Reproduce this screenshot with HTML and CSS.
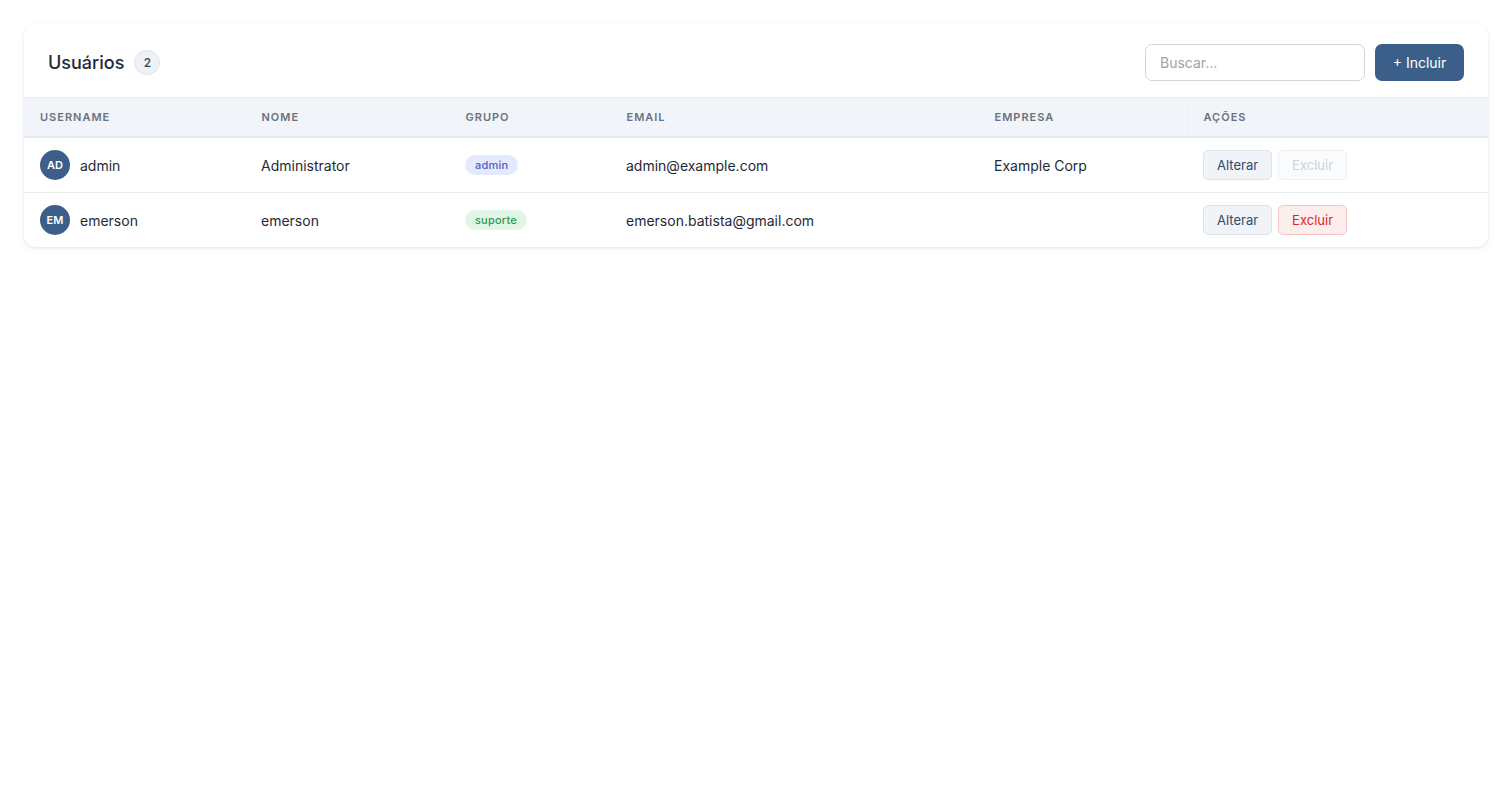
FILE: index.html
```html
<!DOCTYPE html>
<html>
  <head>
    <meta charset="utf-8" />
    <title>Usuários</title>
    <link rel="stylesheet" href="styles.css">
  </head>
  <body>
    <div class="card">
      <div class="card-header">
        <div class="title">
          <h2>Usuários</h2>
          <span class="count">2</span>
        </div>
        <div class="toolbar">
          <input type="text" class="search" placeholder="Buscar..." />
          <button class="btn-primary">+ Incluir</button>
        </div>
      </div>
      <table class="users">
        <thead>
          <tr>
            <th class="col-user">Username</th>
            <th class="col-nome">Nome</th>
            <th class="col-grupo">Grupo</th>
            <th class="col-email">Email</th>
            <th class="col-empresa">Empresa</th>
            <th>Ações</th>
          </tr>
        </thead>
        <tbody>
          <tr>
            <td>
              <div class="user">
                <span class="avatar">AD</span>
                <span>admin</span>
              </div>
            </td>
            <td>Administrator</td>
            <td><span class="tag tag-admin">admin</span></td>
            <td>admin@example.com</td>
            <td>Example Corp</td>
            <td>
              <div class="actions">
                <button class="btn-edit">Alterar</button>
                <button class="btn-delete" disabled>Excluir</button>
              </div>
            </td>
          </tr>
          <tr>
            <td>
              <div class="user">
                <span class="avatar">EM</span>
                <span>emerson</span>
              </div>
            </td>
            <td>emerson</td>
            <td><span class="tag tag-suporte">suporte</span></td>
            <td>emerson.batista@gmail.com</td>
            <td></td>
            <td>
              <div class="actions">
                <button class="btn-edit">Alterar</button>
                <button class="btn-delete">Excluir</button>
              </div>
            </td>
          </tr>
        </tbody>
      </table>
    </div>
  </body>
</html>
```

FILE: styles.css
```css
body {
  margin: 0;
  padding: 24px;
  font-family: Inter, "Noto Sans", Arial, sans-serif;
  color: #1f2937;
  background: #ffffff;
}
.card {
  background: white;
  border-radius: 12px;
  box-shadow: 0 1px 3px rgba(0, 0, 0, 0.08), 0 2px 10px rgba(0, 0, 0, 0.04);
  overflow: hidden;
}
.card-header {
  display: flex;
  justify-content: space-between;
  align-items: center;
  padding: 20px 24px 16px;
  border-bottom: 1px solid #e2e8f0;
}
.title {
  display: flex;
  align-items: center;
  gap: 10px;
}
.title h2 {
  margin: 0;
  font-size: 18px;
  font-weight: 500;
  color: #1e293b;
}
.count {
  display: inline-flex;
  align-items: center;
  justify-content: center;
  min-width: 26px;
  height: 25px;
  padding: 0 2px;
  box-sizing: border-box;
  border-radius: 13px;
  background: #eef2f7;
  border: 1px solid #dde4ee;
  font-size: 12px;
  font-weight: 500;
  color: #334155;
}
.toolbar {
  display: flex;
  align-items: center;
  gap: 10px;
}
.search {
  width: 220px;
  height: 37px;
  box-sizing: border-box;
  padding: 0 14px;
  border: 1px solid #d1d5db;
  border-radius: 7px;
  font-family: inherit;
  font-size: 14px;
  color: #1f2937;
}
.search::placeholder {
  color: #9ca3af;
}
.btn-primary {
  height: 37px;
  width: 89px;
  border: none;
  border-radius: 7px;
  background: #3b5f88;
  color: white;
  font-family: inherit;
  font-size: 14px;
  font-weight: 400;
  cursor: pointer;
}
.users {
  width: 100%;
  border-collapse: collapse;
  table-layout: fixed;
}
.users th {
  box-sizing: border-box;
  height: 39px;
  padding: 0 16px;
  text-align: left;
  background: #f1f4f8;
  border-bottom: 2px solid #e2e8f0;
  border-right: 1px solid #edf0f4;
  font-size: 11px;
  font-weight: 600;
  letter-spacing: 1px;
  text-transform: uppercase;
  color: #6b7280;
}
.users th:last-child {
  border-right: none;
}
.col-user { width: 221px; }
.col-nome { width: 204px; }
.col-grupo { width: 161px; }
.col-email { width: 368px; }
.col-empresa { width: 209px; }
.users td {
  height: 54px;
  padding: 0 16px;
  font-size: 14px;
  color: #1f2937;
  border-bottom: 1px solid #e9edf2;
}
.users tbody tr:last-child td {
  border-bottom: none;
}
.user {
  display: flex;
  align-items: center;
  gap: 10px;
  font-size: 14px;
}
.avatar {
  width: 30px;
  height: 30px;
  border-radius: 50%;
  background: #3b5f88;
  color: white;
  font-size: 11px;
  font-weight: 600;
  display: inline-flex;
  align-items: center;
  justify-content: center;
}
.tag {
  display: inline-block;
  padding: 3px 10px;
  border-radius: 10px;
  font-size: 11px;
  font-weight: 500;
  letter-spacing: 0.2px;
}
.tag-admin {
  background: #e5e9fd;
  color: #4a5fc1;
}
.tag-suporte {
  background: #e1f5e7;
  color: #2f9a4f;
}
.actions {
  display: flex;
  gap: 6px;
}
.actions button {
  height: 30px;
  padding: 0 13px;
  border-radius: 5px;
  font-family: inherit;
  font-size: 13px;
  font-weight: 400;
  cursor: pointer;
}
.btn-edit {
  background: #f0f3f7;
  border: 1px solid #dbe2ea;
  color: #2f4a6b;
}
.btn-delete {
  background: #fdeeee;
  border: 1px solid #f7c5c5;
  color: #dc2626;
}
.btn-delete:disabled {
  background: #fafbfc;
  border-color: #eef1f4;
  color: #cbd2da;
  cursor: default;
}
```
